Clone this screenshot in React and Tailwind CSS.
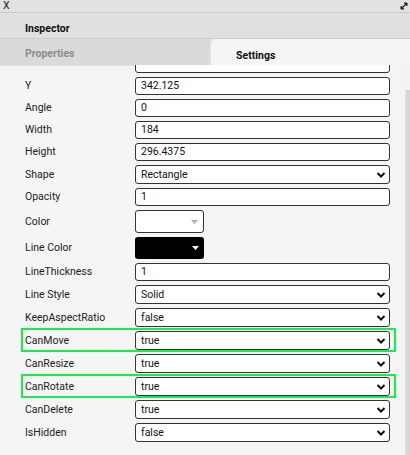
import React from "react";

const Chevron = () => (
  <svg width="10" height="6" viewBox="0 0 10 6" className="shrink-0">
    <polyline points="1.5,1 5,4.5 8.5,1" fill="none" stroke="#111" strokeWidth="2" strokeLinejoin="miter" />
  </svg>
);

const TextField = ({ value }) => (
  <div className="w-[255px] h-[18px] border border-[#333] rounded-[3px] bg-white flex items-center pl-[5px] text-[#111]">
    {value}
  </div>
);

const SelectField = ({ value }) => (
  <div className="w-[255px] h-[19px] border border-[#333] rounded-[3px] bg-white flex items-center justify-between pl-[5px] pr-[3px] text-[#111]">
    <span>{value}</span>
    <Chevron />
  </div>
);

const Row = ({ label, children, highlight }) => (
  <div className="relative flex items-center mb-[4px] w-[365px]">
    <div className="w-[110px] text-[#222]">{label}</div>
    {children}
    {highlight && (
      <div className="absolute -left-[4px] -right-[6px] -top-[3px] -bottom-[2px] border-2 border-[#18ee4a] pointer-events-none" />
    )}
  </div>
);

export default function App() {
  return (
    <div className="w-[410px] h-[455px] bg-[#f5f5f5] font-['Roboto','Liberation_Sans',sans-serif] text-[10.5px] overflow-hidden flex flex-col">
      <div className="h-[13px] shrink-0 bg-[#e2e2e2] border-b border-[#c9c9c9] flex items-center justify-between pl-[3px] pr-[2px]">
        <span className="text-[10.5px] leading-none text-[#222]">X</span>
        <svg width="8" height="8" viewBox="0 0 8 8">
          <line x1="1" y1="7" x2="7" y2="1" stroke="#222" strokeWidth="1.2" />
          <polyline points="4,1 7,1 7,4" fill="#222" stroke="#222" strokeWidth="1" />
          <polyline points="1,4 1,7 4,7" fill="#222" stroke="#222" strokeWidth="1" />
        </svg>
      </div>
      <div className="h-[26px] shrink-0 bg-[#e0e0e0] border-b border-[#cdcdcd] flex items-center pl-[25px] pt-[6px] font-bold text-[#111]">
        Inspector
      </div>
      <div className="h-[26px] shrink-0 flex bg-[#e0e0e0]">
        <div className="w-[209px] bg-[#dadada] rounded-br-[5px] shadow-[0_1px_1px_rgba(0,0,0,0.08)] flex items-center pl-[25px] pt-[4px] font-bold text-[#8c8c8c]">
          Properties
        </div>
        <div className="flex-1 ml-[2px] bg-[#f5f5f5] rounded-tl-[5px] flex items-center pl-[25px] pt-[7px] font-bold text-[#111]">
          Settings
        </div>
      </div>
      <div className="flex-1 flex overflow-hidden">
        <div className="w-[400px] pl-[25px] pt-0">
          <div className="mt-[-10px] mb-[4px] ml-[110px] w-[255px] h-[18px] border border-[#333] rounded-[3px] bg-white" />
          <Row label="Y"><TextField value="342.125" /></Row>
          <Row label="Angle"><TextField value="0" /></Row>
          <Row label="Width"><TextField value="184" /></Row>
          <Row label="Height"><TextField value="296.4375" /></Row>
          <Row label="Shape"><SelectField value="Rectangle" /></Row>
          <Row label="Opacity"><TextField value="1" /></Row>
          <Row label="Color">
            <div className="w-[69px] h-[23px] border border-[#333] rounded-[3px] bg-white flex items-center justify-end pr-[5px]">
              <svg width="7" height="4" viewBox="0 0 7 4"><polygon points="0,0 7,0 3.5,4" fill="#b0b0b0" /></svg>
            </div>
          </Row>
          <Row label="Line Color">
            <div className="w-[69px] h-[22px] rounded-[3px] bg-black flex items-center justify-end pr-[5px]">
              <svg width="7" height="4" viewBox="0 0 7 4"><polygon points="0,0 7,0 3.5,4" fill="#ffffff" /></svg>
            </div>
          </Row>
          <Row label="LineThickness"><TextField value="1" /></Row>
          <Row label="Line Style"><SelectField value="Solid" /></Row>
          <Row label="KeepAspectRatio"><SelectField value="false" /></Row>
          <Row label="CanMove" highlight><SelectField value="true" /></Row>
          <Row label="CanResize"><SelectField value="true" /></Row>
          <Row label="CanRotate" highlight><SelectField value="true" /></Row>
          <Row label="CanDelete"><SelectField value="true" /></Row>
          <Row label="IsHidden"><SelectField value="false" /></Row>
        </div>
        <div className="w-[10px] bg-[#f3f3f3] pt-[25px] flex justify-end">
          <div className="w-[5px] h-full bg-[#d6d6d6] border-l border-[#e4e4e4]" />
        </div>
      </div>
    </div>
  );
}
